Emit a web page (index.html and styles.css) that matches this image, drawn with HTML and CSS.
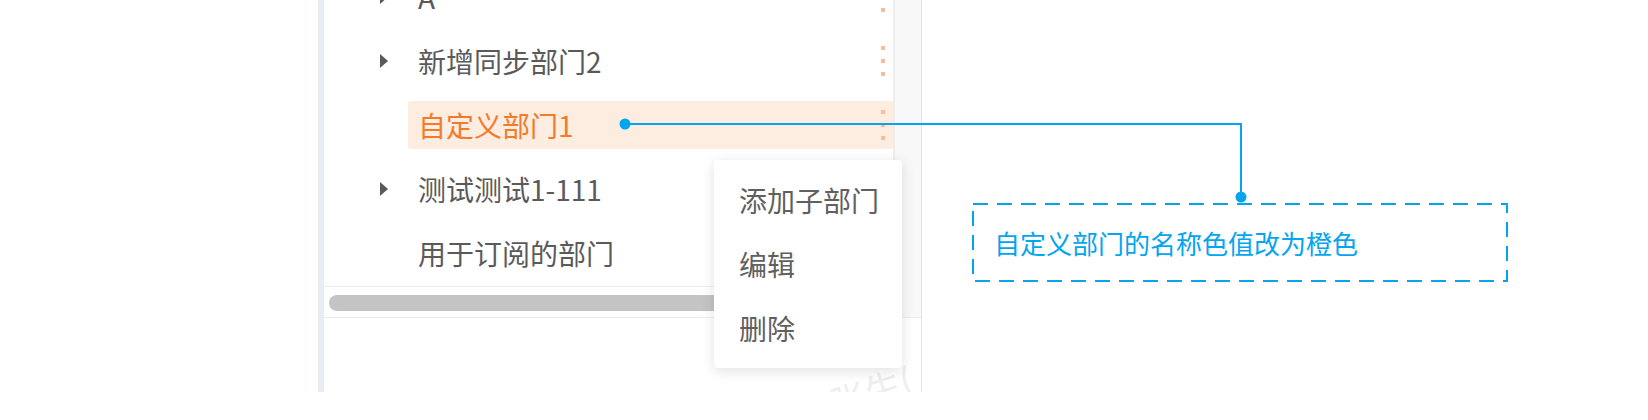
FILE: index.html
```html
<!DOCTYPE html>
<html lang="zh-CN">
<head>
<meta charset="utf-8">
<title>部门树</title>
<link rel="stylesheet" href="styles.css">
</head>
<body>
<div class="page">
  <div class="panel">
    <div class="panel-main">
      <div class="tree-col">
        <div class="tree">
          <div class="tree-list">
            <div class="row">
              <span class="caret"></span>
              <div class="label"><span class="name">A</span><span class="dots"><i></i><i></i><i></i></span></div>
            </div>
            <div class="row">
              <span class="caret"></span>
              <div class="label"><span class="name">新增同步部门2</span><span class="dots"><i></i><i></i><i></i></span></div>
            </div>
            <div class="row">
              <span class="caret caret-empty"></span>
              <div class="label active"><span class="name">自定义部门1</span><span class="dots"><i></i><i></i><i></i></span></div>
            </div>
            <div class="row">
              <span class="caret"></span>
              <div class="label"><span class="name">测试测试1-111</span></div>
            </div>
            <div class="row">
              <span class="caret caret-empty"></span>
              <div class="label"><span class="name">用于订阅的部门</span></div>
            </div>
          </div>
        </div>
        <div class="hscroll"><div class="hthumb"></div></div>
      </div>
      <div class="vscroll"></div>
    </div>
    <div class="panel-foot"><span class="watermark">张生(</span></div>
  </div>

  <div class="menu">
    <div class="menu-item">添加子部门</div>
    <div class="menu-item">编辑</div>
    <div class="menu-item">删除</div>
  </div>

  <svg class="connector" width="1648" height="420" viewBox="0 0 1648 420">
    <polyline points="625,124 1241,124 1241,197" fill="none" stroke="#03a5ee" stroke-width="2"/>
    <circle cx="625" cy="124" r="5.5" fill="#03a5ee"/>
    <circle cx="1241" cy="197" r="5.5" fill="#03a5ee"/>
    <rect x="973" y="204" width="534" height="77" fill="none" stroke="#03a5ee" stroke-width="2" stroke-dasharray="15 9"/>
  </svg>
  <div class="note">自定义部门的名称色值改为橙色</div>
</div>
</body>
</html>
```
FILE: styles.css
```css
html, body {
  margin: 0;
  padding: 0;
  background: #ffffff;
}

.page {
  position: relative;
  width: 1648px;
  height: 420px;
  overflow: hidden;
  font-family: "Noto Sans CJK SC", "Noto Sans", sans-serif;
}

.panel {
  margin-left: 318px;
  width: 604px;
  height: 392px;
  box-sizing: border-box;
  border-left: 6px solid #e9edf2;
  border-right: 1px solid #e4e4e4;
  display: flex;
  flex-direction: column;
  background: #fff;
}

.panel-main {
  display: flex;
  height: 318px;
  border-bottom: 1px solid #ececec;
  box-sizing: border-box;
}

.tree-col {
  flex: 1;
  display: flex;
  flex-direction: column;
  min-width: 0;
}

.tree {
  height: 287px;
  overflow: hidden;
  border-bottom: 1px solid #ededed;
  box-sizing: border-box;
}

.tree-list {
  margin-top: -35px;
  display: flex;
  flex-direction: column;
}

.row {
  height: 64px;
  display: flex;
  align-items: center;
  padding-left: 56px;
}

.caret {
  width: 0;
  height: 0;
  border-top: 7px solid transparent;
  border-bottom: 7px solid transparent;
  border-left: 8px solid #595959;
  margin-right: 20px;
}

.caret-empty {
  border-left-color: transparent;
}

.label {
  flex: 1;
  height: 48px;
  display: flex;
  align-items: center;
  padding-left: 10px;
  font-size: 28px;
  color: #5a5a5a;
  border-radius: 2px;
}

.label.active {
  background: #fcede0;
  color: #f27a2b;
}

.name {
  white-space: nowrap;
}

.dots {
  margin-left: auto;
  margin-right: 8px;
  display: flex;
  flex-direction: column;
  gap: 9px;
}

.dots i {
  display: block;
  width: 4px;
  height: 4px;
  background: #f8bc9c;
}

.hscroll {
  height: 30px;
  padding: 8px 0 0 5px;
  box-sizing: border-box;
}

.hthumb {
  width: 400px;
  height: 16px;
  border-radius: 8px;
  background: #c4c4c4;
}

.vscroll {
  width: 28px;
  background: #f8f8f8;
  border-left: 2px solid #ededed;
  box-sizing: border-box;
}

.panel-foot {
  flex: 1;
  position: relative;
  overflow: hidden;
}

.watermark {
  position: absolute;
  left: 505px;
  top: 46px;
  font-size: 36px;
  color: #eeeeee;
  transform: rotate(-18deg);
  white-space: nowrap;
}

.menu {
  position: absolute;
  left: 714px;
  top: 160px;
  width: 188px;
  padding: 8px 0;
  box-sizing: border-box;
  background: #ffffff;
  border-radius: 4px;
  box-shadow: 0 3px 14px rgba(0, 0, 0, 0.12);
}

.menu-item {
  height: 64px;
  display: flex;
  align-items: center;
  padding-left: 25px;
  font-size: 28px;
  color: #606060;
  white-space: nowrap;
}

.connector {
  position: absolute;
  left: 0;
  top: 0;
  pointer-events: none;
}

.note {
  position: absolute;
  left: 994px;
  top: 204px;
  height: 77px;
  display: flex;
  align-items: center;
  font-size: 26px;
  color: #03a5ee;
  white-space: nowrap;
}
```
